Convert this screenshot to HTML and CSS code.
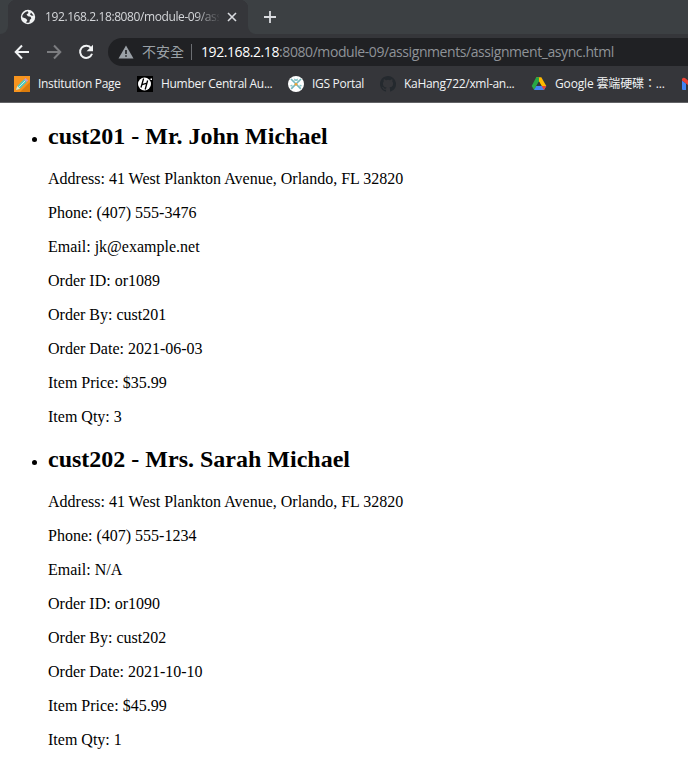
FILE: index.html
```html
<!DOCTYPE html>
<html lang="en">
<head>
<meta charset="utf-8">
<title>Assignment</title>
<link rel="stylesheet" href="styles.css">
</head>
<body>
<header class="browser">
  <div class="tabs">
    <div class="edge"></div>
    <div class="tab">
      <svg class="globe" width="16" height="16" viewBox="0 0 16 16"><circle cx="8" cy="8" r="7.2" fill="#f1f3f4"/><path d="M2.4 6.5Q4 3 7.8 2.3L8.5 4 6.5 5.4 8 7.3 10.6 7.8 11.3 9.5 9.8 11 9.5 13.2Q7.8 14 6 13.6L7.4 11.2 5.8 9.5 2.3 8.3ZM11 3.5L13.5 6.5 11.8 6.8 10 5.5Z" fill="#35363a"/></svg>
      <span class="title">192.168.2.18:8080/module-09/ass</span>
      <svg class="close" width="10" height="10" viewBox="0 0 10 10"><path d="M1 1l8 8M9 1L1 9" stroke="#dadce0" stroke-width="1.6"/></svg>
    </div>
    <div class="rest">
      <svg width="14" height="14" viewBox="0 0 14 14"><path d="M7 1v12M1 7h12" stroke="#dadce0" stroke-width="1.8"/></svg>
    </div>
  </div>
  <div class="toolbar">
    <svg width="16" height="16" viewBox="0 0 16 16"><path d="M15 8H2M8 1.5L1.7 8 8 14.5" fill="none" stroke="#f1f3f4" stroke-width="2"/></svg>
    <svg width="16" height="16" viewBox="0 0 16 16"><path d="M1 8h13M8 1.5L14.3 8 8 14.5" fill="none" stroke="#7c7d80" stroke-width="2"/></svg>
    <svg width="16" height="16" viewBox="0 0 16 16"><path d="M13.2 4.3A6.1 6.1 0 1 0 14 9.8" fill="none" stroke="#f1f3f4" stroke-width="2"/><path d="M15 .8v6.4H8.6Z" fill="#f1f3f4"/></svg>
    <div class="address">
      <svg width="16" height="14" viewBox="0 0 16 14"><path d="M8 .5L15.5 13.5H.5Z" fill="#9aa0a6"/><path d="M7.2 5h1.6v4H7.2zM7.2 10.2h1.6v1.6H7.2z" fill="#202124"/></svg>
      <span class="insecure">不安全</span>
      <span class="divider"></span>
      <span class="url"><b>192.168.2.18</b>:8080/module-09/assignments/assignment_async.html</span>
    </div>
  </div>
  <nav class="bookmarks">
    <a class="mark institution"><svg width="16" height="16" viewBox="0 0 16 16"><path d="M0 0h16v16H0z" fill="#f7941e"/><path d="M6 16h10V6z" fill="#db7c0c"/><path d="M2 14l1.3-4 6.8-6.8 2.7 2.7L6 12.7Z" fill="#54c8bd"/><path d="M2 14l1.3-4L6 12.7Z" fill="#fbe2ae"/><path d="M4.6 11.4l7-7" stroke="#c6f2e8"/><path d="M10.1 3.2l1.5-1.3 2.6 2.6-1.4 1.4Z" fill="#c697c8"/></svg><span>Institution Page</span></a>
    <a class="mark humber"><svg width="16" height="16" viewBox="0 0 16 16"><path d="M0 0h16v16H0z" fill="#000"/><circle cx="7.5" cy="8" r="6.5" fill="#fff"/><path d="M6.6 2.5L4 11.5M10.6 4.5L8.2 13.5M5 8.7L10 7.2" stroke="#000" stroke-width="1.3"/><path d="M13.5 2.5h1.5v1.5h-1.5z" fill="#fff"/></svg><span>Humber Central Au...</span></a>
    <a class="mark igs"><svg width="16" height="16" viewBox="0 0 16 16"><circle cx="8" cy="8" r="8" fill="#fff"/><path d="M8 8L3 3M8 8l5-5M8 8l-4.8 4.8M8 8l4.8 4.8" stroke="#76b8bd" stroke-width="1.7"/><path d="M5.8 2.2Q8 4.5 10.2 2.2L9.5 5H6.5ZM1.5 10l2.6-1.6.8 2.4ZM14.5 10l-2.6-1.6-.8 2.4Z" fill="#86c5c8"/><circle cx="8" cy="8.3" r="1.4" fill="#f0a435"/></svg><span>IGS Portal</span></a>
    <a class="mark github"><svg width="16" height="16" viewBox="0 0 16 16"><path fill="#24292e" d="M8 0C3.58 0 0 3.58 0 8c0 3.54 2.29 6.53 5.47 7.59.4.07.55-.17.55-.38v-1.49c-2.01.37-2.53-.49-2.69-.94-.09-.23-.48-.94-.82-1.13-.28-.15-.68-.52-.01-.53.63-.01 1.08.58 1.23.82.72 1.21 1.87.87 2.33.66.07-.52.28-.87.51-1.07-1.78-.2-3.64-.89-3.64-3.95 0-.87.31-1.59.82-2.15-.08-.2-.36-1.02.08-2.12 0 0 .67-.21 2.2.82a7.6 7.6 0 0 1 4 0c1.53-1.04 2.2-.82 2.2-.82.44 1.1.16 1.92.08 2.12.51.56.82 1.27.82 2.15 0 3.07-1.87 3.75-3.65 3.95.29.25.54.73.54 1.48v2.2c0 .21.15.46.55.38A8 8 0 0 0 8 0Z"/></svg><span>KaHang722/xml-an...</span></a>
    <a class="mark drive"><svg width="16" height="16" viewBox="0 0 16 16"><path d="M5.2 1.3h5.1l5 8.8H10.6Z" fill="#ffba00"/><path d="M5.2 1.3h2.8L8 5.5 3.2 14 .7 10Z" fill="#28a745"/><path d="M8 5.4L5.3 10h5.3Z" fill="#35363a"/><path d="M5.3 10h10L13 14H3Z" fill="#4285f4"/><path d="M10.6 10h4.7L13 14Z" fill="#ea4335"/></svg><span>Google 雲端硬碟：...</span></a>
    <a class="mark gmail"><svg width="16" height="16" viewBox="0 0 16 16"><path d="M0 4.5l4 3V14H1q-1 0-1-1Z" fill="#4285f4"/><path d="M0 4.5V3q1-2 3-1l5 4 5-4q2-1 3 1v1.5l-8 6Z" fill="#ea4335"/><path d="M12 7.5l4-3V13q0 1-1 1h-3Z" fill="#34a853"/></svg></a>
  </nav>
</header>
<main>
  <ul>
    <li>
      <h2>cust201 - Mr. John Michael</h2>
      <p>Address: 41 West Plankton Avenue, Orlando, FL 32820</p>
      <p>Phone: (407) 555-3476</p>
      <p>Email: jk@example.net</p>
      <p>Order ID: or1089</p>
      <p>Order By: cust201</p>
      <p>Order Date: 2021-06-03</p>
      <p>Item Price: $35.99</p>
      <p>Item Qty: 3</p>
    </li>
    <li>
      <h2>cust202 - Mrs. Sarah Michael</h2>
      <p>Address: 41 West Plankton Avenue, Orlando, FL 32820</p>
      <p>Phone: (407) 555-1234</p>
      <p>Email: N/A</p>
      <p>Order ID: or1090</p>
      <p>Order By: cust202</p>
      <p>Order Date: 2021-10-10</p>
      <p>Item Price: $45.99</p>
      <p>Item Qty: 1</p>
    </li>
  </ul>
</main>
</body>
</html>
```
FILE: styles.css
```css
body {
  margin: 0;
  background: #fff;
  color: #000;
  font: 16px/18px "Liberation Serif", serif;
}

.browser {
  box-sizing: border-box;
  height: 103px;
  overflow: hidden;
  background: #35363a;
  border-bottom: 1px solid #626366;
  color: #f1f3f4;
  font-family: "Open Sans", "Noto Sans CJK TC", sans-serif;
  font-size: 12px;
  white-space: nowrap;
}

.browser svg { display: block; flex: none; }

.tabs {
  display: flex;
  height: 34px;
}

.edge {
  flex: none;
  width: 8px;
  background: #3c4043;
  border-radius: 0 0 8px 0;
  box-shadow: 0 -8px 0 #3c4043;
}

.tab {
  box-sizing: border-box;
  display: flex;
  flex: none;
  align-items: center;
  width: 240px;
  padding-left: 12px;
  background: radial-gradient(circle at 8px 8px, #35363a 8px, #3c4043 8.5px) 0 0 / 8px 8px no-repeat,
    radial-gradient(circle at 0 8px, #35363a 8px, #3c4043 8.5px) 100% 0 / 8px 8px no-repeat,
    #35363a;
}

.title {
  width: 174px;
  margin-left: 9px;
  color: #d5d7da;
  letter-spacing: -0.4px;
  -webkit-mask-image: linear-gradient(90deg, #000 150px, transparent 176px);
  mask-image: linear-gradient(90deg, #000 150px, transparent 176px);
}

.close { margin-left: 8px; }

.rest {
  display: flex;
  flex: 1;
  align-items: center;
  padding-left: 15px;
  background: #3c4043;
  border-bottom-left-radius: 8px;
}

.toolbar {
  display: flex;
  align-items: center;
  gap: 16px;
  height: 28px;
  padding: 4px 0 4px 14px;
}

.address {
  display: flex;
  flex: 1;
  align-items: center;
  height: 28px;
  margin-left: -2px;
  padding-left: 10px;
  background: #202124;
  border-radius: 14px 0 0 14px;
  font-size: 14px;
}

.insecure { margin-left: 8px; color: #9aa0a6; }

.divider {
  width: 1px;
  height: 16px;
  margin: 0 9px 0 7px;
  background: #6b6e72;
}

.url { color: #8f9398; letter-spacing: -0.42px; }
.url b { color: #fff; font-weight: 400; }

.bookmarks {
  display: flex;
  align-items: center;
  height: 28px;
  padding-left: 14px;
  line-height: 18px;
}

.mark { display: flex; flex: none; align-items: center; gap: 8px; }
.mark span { margin-top: -1px; }
.institution { width: 123px; letter-spacing: -0.3px; }
.humber { width: 151px; letter-spacing: -0.3px; }
.igs { width: 92px; letter-spacing: -0.3px; }
.github { width: 151px; letter-spacing: -0.3px; }
.drive { width: 151px; letter-spacing: -0.15px; }

main { display: flow-root; }

ul { margin: 0; padding-left: 48px; }
h2 { margin: 19.92px 0; font-size: 24px; line-height: 27px; }
p { margin: 16px 0; }
```
